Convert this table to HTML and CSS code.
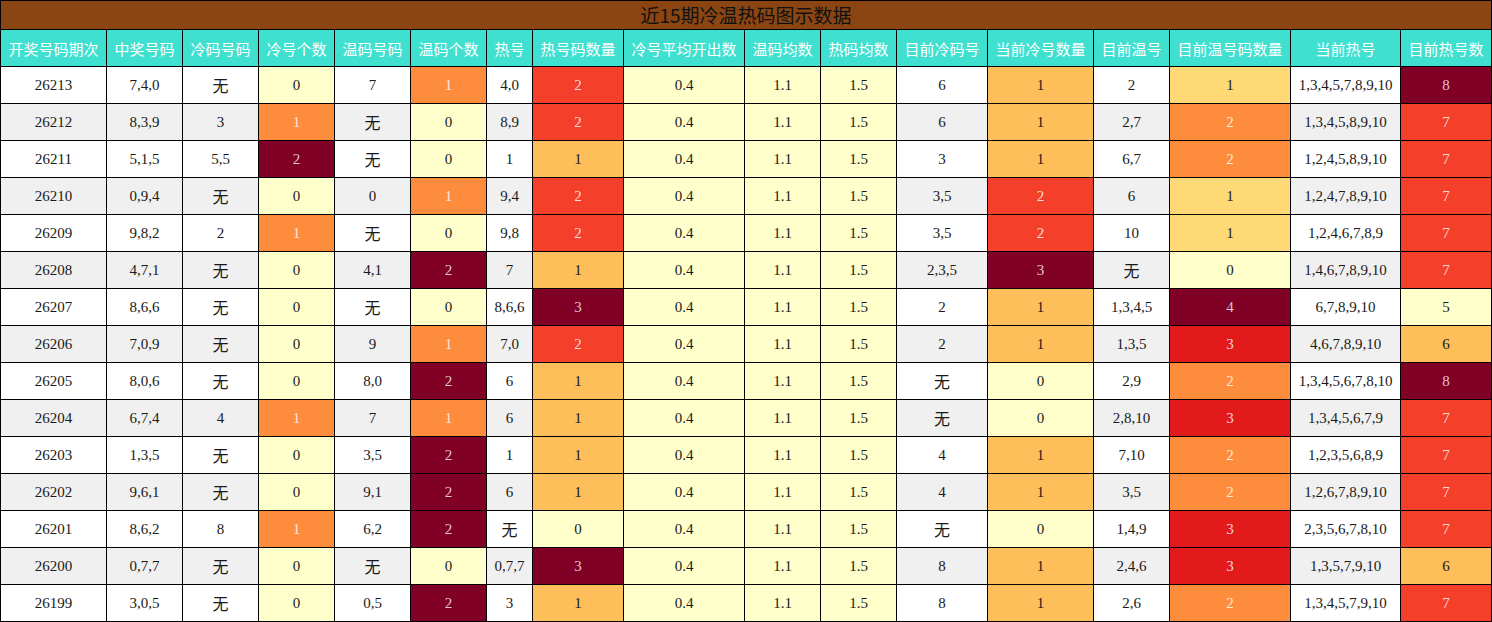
FILE: index.html
```html
<!DOCTYPE html>
<html lang="zh">
<head>
<meta charset="utf-8">
<title>近15期冷温热码图示数据</title>
<link rel="stylesheet" href="styles.css">
</head>
<body>
<table class="data">
<colgroup>
<col class="w106"><col class="w76"><col class="w76"><col class="w76"><col class="w76"><col class="w76"><col class="w46"><col class="w91"><col class="w121"><col class="w76"><col class="w76"><col class="w91"><col class="w106"><col class="w76"><col class="w121"><col class="w110"><col class="w91">
</colgroup>
<thead>
<tr class="title"><th colspan="17">近15期冷温热码图示数据</th></tr>
<tr class="head">
<th>开奖号码期次</th><th>中奖号码</th><th>冷码号码</th><th>冷号个数</th><th>温码号码</th><th>温码个数</th><th>热号</th><th>热号码数量</th><th>冷号平均开出数</th><th>温码均数</th><th>热码均数</th><th>目前冷码号</th><th>当前冷号数量</th><th>目前温号</th><th>目前温号码数量</th><th>当前热号</th><th>目前热号数</th>
</tr>
</thead>
<tbody>
<tr><td>26213</td><td>7,4,0</td><td class="cn">无</td><td class="y0">0</td><td>7</td><td class="o2">1</td><td>4,0</td><td class="r1">2</td><td class="y0">0.4</td><td class="y0">1.1</td><td class="y0">1.5</td><td>6</td><td class="o1">1</td><td>2</td><td class="y1">1</td><td>1,3,4,5,7,8,9,10</td><td class="d">8</td></tr>
<tr><td>26212</td><td>8,3,9</td><td>3</td><td class="o2">1</td><td class="cn">无</td><td class="y0">0</td><td>8,9</td><td class="r1">2</td><td class="y0">0.4</td><td class="y0">1.1</td><td class="y0">1.5</td><td>6</td><td class="o1">1</td><td>2,7</td><td class="o2">2</td><td>1,3,4,5,8,9,10</td><td class="r1">7</td></tr>
<tr><td>26211</td><td>5,1,5</td><td>5,5</td><td class="d">2</td><td class="cn">无</td><td class="y0">0</td><td>1</td><td class="o1">1</td><td class="y0">0.4</td><td class="y0">1.1</td><td class="y0">1.5</td><td>3</td><td class="o1">1</td><td>6,7</td><td class="o2">2</td><td>1,2,4,5,8,9,10</td><td class="r1">7</td></tr>
<tr><td>26210</td><td>0,9,4</td><td class="cn">无</td><td class="y0">0</td><td>0</td><td class="o2">1</td><td>9,4</td><td class="r1">2</td><td class="y0">0.4</td><td class="y0">1.1</td><td class="y0">1.5</td><td>3,5</td><td class="r1">2</td><td>6</td><td class="y1">1</td><td>1,2,4,7,8,9,10</td><td class="r1">7</td></tr>
<tr><td>26209</td><td>9,8,2</td><td>2</td><td class="o2">1</td><td class="cn">无</td><td class="y0">0</td><td>9,8</td><td class="r1">2</td><td class="y0">0.4</td><td class="y0">1.1</td><td class="y0">1.5</td><td>3,5</td><td class="r1">2</td><td>10</td><td class="y1">1</td><td>1,2,4,6,7,8,9</td><td class="r1">7</td></tr>
<tr><td>26208</td><td>4,7,1</td><td class="cn">无</td><td class="y0">0</td><td>4,1</td><td class="d">2</td><td>7</td><td class="o1">1</td><td class="y0">0.4</td><td class="y0">1.1</td><td class="y0">1.5</td><td>2,3,5</td><td class="d">3</td><td class="cn">无</td><td class="y0">0</td><td>1,4,6,7,8,9,10</td><td class="r1">7</td></tr>
<tr><td>26207</td><td>8,6,6</td><td class="cn">无</td><td class="y0">0</td><td class="cn">无</td><td class="y0">0</td><td>8,6,6</td><td class="d">3</td><td class="y0">0.4</td><td class="y0">1.1</td><td class="y0">1.5</td><td>2</td><td class="o1">1</td><td>1,3,4,5</td><td class="d">4</td><td>6,7,8,9,10</td><td class="y0">5</td></tr>
<tr><td>26206</td><td>7,0,9</td><td class="cn">无</td><td class="y0">0</td><td>9</td><td class="o2">1</td><td>7,0</td><td class="r1">2</td><td class="y0">0.4</td><td class="y0">1.1</td><td class="y0">1.5</td><td>2</td><td class="o1">1</td><td>1,3,5</td><td class="r2">3</td><td>4,6,7,8,9,10</td><td class="o1">6</td></tr>
<tr><td>26205</td><td>8,0,6</td><td class="cn">无</td><td class="y0">0</td><td>8,0</td><td class="d">2</td><td>6</td><td class="o1">1</td><td class="y0">0.4</td><td class="y0">1.1</td><td class="y0">1.5</td><td class="cn">无</td><td class="y0">0</td><td>2,9</td><td class="o2">2</td><td>1,3,4,5,6,7,8,10</td><td class="d">8</td></tr>
<tr><td>26204</td><td>6,7,4</td><td>4</td><td class="o2">1</td><td>7</td><td class="o2">1</td><td>6</td><td class="o1">1</td><td class="y0">0.4</td><td class="y0">1.1</td><td class="y0">1.5</td><td class="cn">无</td><td class="y0">0</td><td>2,8,10</td><td class="r2">3</td><td>1,3,4,5,6,7,9</td><td class="r1">7</td></tr>
<tr><td>26203</td><td>1,3,5</td><td class="cn">无</td><td class="y0">0</td><td>3,5</td><td class="d">2</td><td>1</td><td class="o1">1</td><td class="y0">0.4</td><td class="y0">1.1</td><td class="y0">1.5</td><td>4</td><td class="o1">1</td><td>7,10</td><td class="o2">2</td><td>1,2,3,5,6,8,9</td><td class="r1">7</td></tr>
<tr><td>26202</td><td>9,6,1</td><td class="cn">无</td><td class="y0">0</td><td>9,1</td><td class="d">2</td><td>6</td><td class="o1">1</td><td class="y0">0.4</td><td class="y0">1.1</td><td class="y0">1.5</td><td>4</td><td class="o1">1</td><td>3,5</td><td class="o2">2</td><td>1,2,6,7,8,9,10</td><td class="r1">7</td></tr>
<tr><td>26201</td><td>8,6,2</td><td>8</td><td class="o2">1</td><td>6,2</td><td class="d">2</td><td class="cn">无</td><td class="y0">0</td><td class="y0">0.4</td><td class="y0">1.1</td><td class="y0">1.5</td><td class="cn">无</td><td class="y0">0</td><td>1,4,9</td><td class="r2">3</td><td>2,3,5,6,7,8,10</td><td class="r1">7</td></tr>
<tr><td>26200</td><td>0,7,7</td><td class="cn">无</td><td class="y0">0</td><td class="cn">无</td><td class="y0">0</td><td>0,7,7</td><td class="d">3</td><td class="y0">0.4</td><td class="y0">1.1</td><td class="y0">1.5</td><td>8</td><td class="o1">1</td><td>2,4,6</td><td class="r2">3</td><td>1,3,5,7,9,10</td><td class="o1">6</td></tr>
<tr><td>26199</td><td>3,0,5</td><td class="cn">无</td><td class="y0">0</td><td>0,5</td><td class="d">2</td><td>3</td><td class="o1">1</td><td class="y0">0.4</td><td class="y0">1.1</td><td class="y0">1.5</td><td>8</td><td class="o1">1</td><td>2,6</td><td class="o2">2</td><td>1,3,4,5,7,9,10</td><td class="r1">7</td></tr>
</tbody>
</table>
</body>
</html>
```
FILE: styles.css
```css
html, body {
  margin: 0;
  padding: 0;
  background: #ffffff;
}

.data {
  border-collapse: collapse;
  table-layout: fixed;
  width: 1492px;
  font-family: "Liberation Serif", "Noto Sans CJK SC", serif;
  font-size: 15px;
  color: #1a1a1a;
}

.w106 { width: 106px; }
.w76 { width: 76px; }
.w46 { width: 46px; }
.w91 { width: 91px; }
.w121 { width: 121px; }
.w110 { width: 110px; }

.data th,
.data td {
  border: 1px solid #000;
  padding: 0;
  text-align: center;
  white-space: nowrap;
  overflow: hidden;
}

.title th {
  background: #8b4513;
  height: 28px;
  font-family: "Noto Sans CJK SC", sans-serif;
  font-weight: normal;
  font-size: 19px;
  line-height: 28px;
  color: #111;
}

.head th {
  background: #40e0d0;
  height: 36px;
  font-family: "Noto Sans CJK SC", sans-serif;
  font-weight: normal;
  font-size: 15px;
  color: #ffffff;
}

.data tbody tr {
  background: #ffffff;
}

.data tbody tr:nth-child(even) {
  background: #f0f0f0;
}

.data tbody td {
  height: 36px;
}

.data td.cn {
  font-family: "Noto Sans CJK SC", sans-serif;
  font-size: 16px;
}

.data td.y0 { background: #ffffcc; }
.data td.y1 { background: #fed976; }
.data td.o1 { background: #febf5a; }
.data td.o2 { background: #fd8d3c; color: rgba(255,255,255,0.82); }
.data td.r1 { background: #f4402a; color: rgba(255,255,255,0.82); }
.data td.r2 { background: #e31a1c; color: rgba(255,255,255,0.82); }
.data td.d { background: #800026; color: rgba(255,255,255,0.78); }
```
